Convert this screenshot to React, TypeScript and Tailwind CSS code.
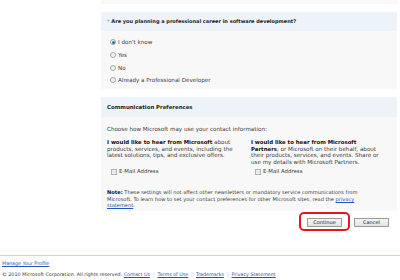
import React from "react";

function Radio({ checked }: { checked?: boolean }) {
  return (
    <span className="inline-flex h-[6px] w-[6px] items-center justify-center rounded-full border border-[#a8a8a8] bg-[#f2f2f2]">
      {checked && <span className="h-[3px] w-[3px] rounded-full bg-[#2a6db5]" />}
    </span>
  );
}

function Check() {
  return <span className="inline-block h-[6px] w-[6px] border border-[#b4b4b4] bg-[#ececec]" />;
}

const FONT = "font-['DejaVu_Sans',Verdana,sans-serif] text-[#3a3a3a]";

export default function App() {
  return (
    <div className="h-[280px] w-[400px] overflow-hidden bg-white">
      <div className="h-[255px]">
        <div className="ml-[101px] w-[296px]">
          <div className="h-[4px] bg-[#f8f8f8]" />
          <div className="h-[8px]" />
          {/* Section 1 */}
          <div className={`${FONT} flex h-[18.5px] items-center bg-[#eef3f9] pl-[6px] text-[5px] font-bold text-[#222]`}>
            <span>
              <span className="text-[#999]">*</span> Are you planning a professional career in software development?
            </span>
          </div>
          <div className={`${FONT} h-[58.5px] bg-[#f8f8f8] pl-[9px] pt-[5.5px] text-[5.6px]`}>
            {[
              ["I don't know", true],
              ["Yes", false],
              ["No", false],
              ["Already a Professional Developer", false],
            ].map(([label, c]) => (
              <div key={label as string} className="flex h-[12.7px] items-center gap-[2px]">
                <Radio checked={c as boolean} />
                <span>{label as string}</span>
              </div>
            ))}
          </div>
          <div className="h-[7.7px]" />
          {/* Section 2 */}
          <div className={`${FONT} flex h-[20px] items-center bg-[#eef3f9] pl-[6px] text-[5.4px] font-bold text-[#222]`}>
            Communication Preferences
          </div>
          <div className={`${FONT} h-[94px] bg-[#f8f8f8] px-[6px] pt-[9px] text-[5.6px] leading-[6.5px]`}>
            <div>Choose how Microsoft may use your contact information:</div>
            <div className="mt-[7px] flex">
              <div className="w-[146px]">
                <b className="text-[5.4px] text-[#111]">I would like to hear from Microsoft</b> about
                <br />
                products, services, and events, including the
                <br />
                latest solutions, tips, and exclusive offers.
              </div>
              <div className="w-[142px]">
                <b className="text-[5.4px] text-[#111]">I would like to hear from Microsoft</b>
                <br />
                <b className="text-[5.4px] text-[#111]">Partners</b>, or Microsoft on their behalf, about
                <br />
                their products, services, and events. Share or
                <br />
                use my details with Microsoft Partners.
              </div>
            </div>
            <div className="mt-[3px] flex h-[7px] text-[5.4px]">
              <div className="flex w-[146px] items-center gap-[2px] pl-[4px]">
                <Check />
                <span>E-Mail Address</span>
              </div>
              <div className="flex items-center gap-[2px] pl-[2px]">
                <Check />
                <span>E-Mail Address</span>
              </div>
            </div>
            <div className="mt-[14px] text-[5.1px]">
              <b className="text-[#111]">Note:</b> These settings will not affect other newsletters or mandatory service communications from
              <br />
              Microsoft. To learn how to set your contact preferences for other Microsoft sites, read the{" "}
              <span className="text-[#2255bb] underline">privacy</span>
              <br />
              <span className="text-[#2255bb] underline">statement</span>.
            </div>
          </div>
          <div className="mt-[1.3px] flex items-start justify-end gap-[4px] pr-[8px]">
            <div className="rounded-[5px] border-2 border-[#e5161b] px-[6px] pb-[2px] pt-[4px]">
              <div className={`${FONT} flex h-[9px] w-[35px] items-center justify-center border border-[#9a9a9a] bg-gradient-to-b from-[#f6f6f6] to-[#e2e2e2] text-[5px] text-[#222]`}>
                Continue
              </div>
            </div>
            <div className="pt-[6px]">
              <div className={`${FONT} flex h-[9px] w-[35px] items-center justify-center border border-[#9a9a9a] bg-gradient-to-b from-[#f6f6f6] to-[#e2e2e2] text-[5px] text-[#222]`}>
                Cancel
              </div>
            </div>
          </div>
        </div>
      </div>
      <div className="h-px w-full bg-[#f0cf9e]" />
      <div className="pl-[2px] pt-[2px] font-['DejaVu_Sans',Tahoma,sans-serif] text-[4.8px] leading-[11px] text-[#333]">
        <div className="text-[#2255bb] underline">Manage Your Profile</div>
        <div>
          © 2010 Microsoft Corporation. All rights reserved.{" "}
          <span className="text-[#2255bb] underline">Contact Us</span>
          <span className="mx-[3px] text-[#bbb]">|</span>
          <span className="text-[#2255bb] underline">Terms of Use</span>
          <span className="mx-[3px] text-[#bbb]">|</span>
          <span className="text-[#2255bb] underline">Trademarks</span>
          <span className="mx-[3px] text-[#bbb]">|</span>
          <span className="text-[#2255bb] underline">Privacy Statement</span>
        </div>
      </div>
    </div>
  );
}
